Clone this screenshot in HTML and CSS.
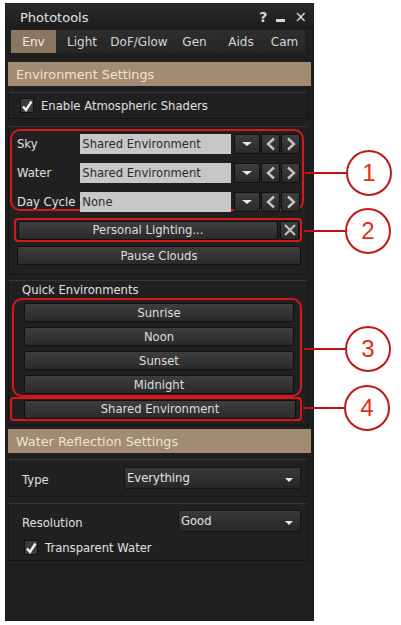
FILE: index.html
```html
<!DOCTYPE html>
<html>
<head>
<meta charset="utf-8">
<link rel="stylesheet" href="styles.css">
</head>
<body>
<div class="page">
  <div class="win">
    <div class="title">
      <span class="title-text">Phototools</span>
      <span class="title-icons"><span class="ti-q">?</span><span class="ti-min"></span><span class="ti-x">×</span></span>
    </div>
    <div class="tabs">
      <div class="tab active t-env">Env</div>
      <div class="tab t-light">Light</div>
      <div class="tab t-dof">DoF/Glow</div>
      <div class="tab t-gen">Gen</div>
      <div class="tab t-aids">Aids</div>
      <div class="tab t-cam">Cam</div>
    </div>
    <div class="hdr hdr1">Environment Settings</div>
    <div class="box box-check">
      <label class="check"><span class="cb"><svg width="12" height="12" viewBox="0 0 12 12"><path d="M2 6.5 L5 10 L10.5 1.5" fill="none" stroke="#f2f2f2" stroke-width="2.4"/></svg></span>Enable Atmospheric Shaders</label>
    </div>
    <div class="box box-env">
      <div class="ring ring1">
        <div class="erow"><span class="elabel">Sky</span><span class="combo">Shared Environment</span><span class="btn bdrop"><i class="tri"></i></span><span class="btn barrow"><svg width="12" height="14" viewBox="0 0 12 14"><path d="M9 1.5 L3 7 L9 12.5" fill="none" stroke="#c4c4c4" stroke-width="2.4"/></svg></span><span class="btn barrow"><svg width="12" height="14" viewBox="0 0 12 14"><path d="M3 1.5 L9 7 L3 12.5" fill="none" stroke="#c4c4c4" stroke-width="2.4"/></svg></span></div>
        <div class="erow"><span class="elabel">Water</span><span class="combo">Shared Environment</span><span class="btn bdrop"><i class="tri"></i></span><span class="btn barrow"><svg width="12" height="14" viewBox="0 0 12 14"><path d="M9 1.5 L3 7 L9 12.5" fill="none" stroke="#c4c4c4" stroke-width="2.4"/></svg></span><span class="btn barrow"><svg width="12" height="14" viewBox="0 0 12 14"><path d="M3 1.5 L9 7 L3 12.5" fill="none" stroke="#c4c4c4" stroke-width="2.4"/></svg></span></div>
        <div class="erow"><span class="elabel">Day Cycle</span><span class="combo">None</span><span class="btn bdrop"><i class="tri"></i></span><span class="btn barrow"><svg width="12" height="14" viewBox="0 0 12 14"><path d="M9 1.5 L3 7 L9 12.5" fill="none" stroke="#c4c4c4" stroke-width="2.4"/></svg></span><span class="btn barrow"><svg width="12" height="14" viewBox="0 0 12 14"><path d="M3 1.5 L9 7 L3 12.5" fill="none" stroke="#c4c4c4" stroke-width="2.4"/></svg></span></div>
      </div>
      <div class="ring ring2">
        <span class="btn bwide">Personal Lighting...</span><span class="btn bx"><svg width="14" height="14" viewBox="0 0 14 14"><path d="M2 2 L12 12 M12 2 L2 12" fill="none" stroke="#c4c4c4" stroke-width="2"/></svg></span>
      </div>
      <div class="btn bpause">Pause Clouds</div>
    </div>
    <div class="box box-quick">
      <div class="qlabel">Quick Environments</div>
      <div class="ring ring3">
        <div class="btn qbtn">Sunrise</div>
        <div class="btn qbtn">Noon</div>
        <div class="btn qbtn">Sunset</div>
        <div class="btn qbtn">Midnight</div>
      </div>
      <div class="ring ring4">
        <div class="btn qbtn">Shared Environment</div>
      </div>
    </div>
    <div class="hdr hdr2">Water Reflection Settings</div>
    <div class="box box-type">
      <span class="wlabel">Type</span>
      <span class="dd dd-type">Everything<i class="tri"></i></span>
    </div>
    <div class="box box-res">
      <div class="resrow">
        <span class="wlabel">Resolution</span>
        <span class="dd dd-res">Good<i class="tri"></i></span>
      </div>
      <label class="check check2"><span class="cb"><svg width="12" height="12" viewBox="0 0 12 12"><path d="M2 6.5 L5 10 L10.5 1.5" fill="none" stroke="#f2f2f2" stroke-width="2.4"/></svg></span>Transparent Water</label>
    </div>
  </div>
  <div class="callout c1"><span class="cline"></span><span class="circle">1</span></div>
  <div class="callout c2"><span class="cline"></span><span class="circle">2</span></div>
  <div class="callout c3"><span class="cline"></span><span class="circle">3</span></div>
  <div class="callout c4"><span class="cline"></span><span class="circle">4</span></div>
</div>
</body>
</html>
```

FILE: styles.css
```css
html, body {
  margin: 0;
  padding: 0;
  background: #ffffff;
}
body {
  font-family: "DejaVu Sans", sans-serif;
  font-size: 11.6px;
  color: #dcdcdc;
}
.page {
  position: relative;
  width: 401px;
  height: 625px;
  padding: 3px 0 0 5px;
  box-sizing: border-box;
}
.win {
  width: 309px;
  height: 618px;
  box-sizing: border-box;
  background: #1f1f1f;
  border: 1px solid #181b20;
  border-top-color: #22262c;
  padding: 0 2px;
  display: flex;
  flex-direction: column;
}
.title {
  height: 25px;
  display: flex;
  align-items: center;
  justify-content: space-between;
  padding: 0 6px 0 14px;
  background: linear-gradient(#2a2a2a, #1c1c1c);
  margin: 0 -2px;
}
.title-text {
  font-size: 13px;
  color: #e2e2e2;
  padding-top: 2px;
}
.title-icons {
  display: flex;
  align-items: center;
  gap: 9px;
  color: #d8d8d8;
  font-weight: bold;
}
.ti-q { font-size: 14px; }
.ti-min {
  width: 9px;
  height: 3px;
  background: #d8d8d8;
  margin-top: 8px;
}
.ti-x { font-size: 15px; font-weight: normal; }
.tabs {
  height: 23px;
  margin: 1px 6px 0 3px;
  background: #2a2a2a;
  display: flex;
  align-items: stretch;
}
.tab {
  display: flex;
  align-items: center;
  justify-content: center;
  font-size: 12px;
  color: #d6d6d6;
  background: linear-gradient(#2e2e2e, #262626);
  margin-right: 1px;
}
.tab.active {
  background: #8b7661;
  color: #f2ece4;
}
.t-env { width: 45px; }
.t-light { width: 50px; }
.t-dof { width: 62px; }
.t-gen { width: 47px; }
.t-aids { width: 44px; }
.t-cam { flex: 1; margin-right: 0; }
.hdr {
  height: 24px;
  background: #a18b72;
  color: #ece4da;
  font-size: 12.8px;
  display: flex;
  align-items: center;
  padding-left: 8px;
}
.hdr1 { margin-top: 9px; }
.box {
  border: 1px solid #141414;
  border-top-color: #363636;
  background: #202020;
  margin-right: 3px;
  box-sizing: border-box;
}
.box-check {
  margin-top: 6px;
  height: 27px;
  display: flex;
  align-items: center;
  padding-left: 11px;
}
.check {
  display: flex;
  align-items: center;
  gap: 7px;
  color: #e0e0e0;
}
.cb {
  width: 12px;
  height: 13px;
  background: #3c3c3c;
  border: 1px solid #111;
  display: flex;
  align-items: center;
  justify-content: center;
}
.box-env {
  margin-top: 7px;
  height: 149px;
  padding: 2px 3px 0 1px;
  display: flex;
  flex-direction: column;
}
.ring {
  border: 2px solid #d81818;
  border-radius: 10px;
  box-sizing: border-box;
}
.ring1 {
  height: 82px;
  padding: 3px 1px 0 5px;
  display: flex;
  flex-direction: column;
  gap: 9px;
}
.erow {
  display: flex;
  align-items: center;
  height: 20px;
}
.elabel {
  width: 64px;
  color: #e0e0e0;
}
.combo {
  width: 152px;
  height: 20px;
  background: #c7c7c7;
  color: #2a2a2a;
  display: flex;
  align-items: center;
  padding-left: 2px;
  margin-right: 3px;
  box-sizing: border-box;
}
.btn {
  background: linear-gradient(#3e3e3e, #2a2a2a);
  border: 1px solid #101010;
  border-radius: 2px;
  box-sizing: border-box;
  display: flex;
  align-items: center;
  justify-content: center;
  color: #dedede;
}
.bdrop {
  width: 27px;
  height: 20px;
  margin-right: 1px;
}
.barrow {
  width: 19px;
  height: 20px;
  margin-right: 1px;
}
.tri {
  display: block;
  width: 0;
  height: 0;
  border-left: 5px solid transparent;
  border-right: 5px solid transparent;
  border-top: 4px solid #e8e8e8;
}
.ring2 {
  margin-top: 7px;
  height: 24px;
  border-radius: 4px;
  padding: 0 1px 0 2px;
  display: flex;
  align-items: center;
  margin-left: 4px;
  margin-right: 2px;
}
.bwide {
  flex: 1;
  height: 19px;
  margin-right: 2px;
}
.bx {
  width: 19px;
  height: 19px;
}
.bpause {
  margin: 4px 3px 0 7px;
  height: 19px;
}
.box-quick {
  margin-top: 5px;
  height: 146px;
  padding: 1px 5px 0 1px;
  display: flex;
  flex-direction: column;
}
.qlabel {
  padding-left: 12px;
  color: #e0e0e0;
  height: 16px;
  line-height: 16px;
}
.ring3 {
  margin-top: 0;
  margin-left: 2px;
  height: 99px;
  padding: 3px 6px 0 10px;
  display: flex;
  flex-direction: column;
  gap: 5px;
}
.qbtn {
  height: 19px;
}
.ring4 {
  height: 24px;
  border-radius: 4px;
  padding: 0 4px 0 12px;
  display: flex;
  flex-direction: column;
  justify-content: center;
}
.hdr2 { margin-top: 3px; }
.box-type {
  margin-top: 6px;
  height: 38px;
  display: flex;
  align-items: center;
  padding: 0 6px 0 13px;
  justify-content: space-between;
}
.wlabel {
  color: #e0e0e0;
  padding-top: 4px;
}
.dd {
  height: 22px;
  background: linear-gradient(#3a3a3a, #262626);
  border: 1px solid #141414;
  border-radius: 2px;
  box-sizing: border-box;
  display: flex;
  align-items: center;
  justify-content: space-between;
  padding: 0 7px 0 2px;
  color: #e4e4e4;
}
.dd .tri {
  border-left-width: 4px;
  border-right-width: 4px;
  border-top-width: 4px;
  margin-top: 3px;
}
.dd-type { width: 177px; }
.dd-res { width: 123px; }
.box-res {
  margin-top: 6px;
  height: 58px;
  padding: 6px 6px 0 13px;
  display: flex;
  flex-direction: column;
}
.resrow {
  display: flex;
  align-items: center;
  justify-content: space-between;
}
.check2 {
  margin-top: 8px;
  margin-left: 2px;
}
.callout {
  position: absolute;
  display: flex;
  align-items: center;
}
.cline {
  width: 42px;
  height: 2px;
  background: #c01010;
}
.circle {
  width: 42px;
  height: 42px;
  border: 2px solid #c01818;
  border-radius: 50%;
  background: #fff;
  display: flex;
  align-items: center;
  justify-content: center;
  font-family: "Liberation Sans", Arial, sans-serif;
  font-size: 24px;
  color: #e03010;
  margin-left: -1px;
}
.c1 { left: 305px; top: 150px; }
.c2 { left: 304px; top: 208px; }
.c3 { left: 304px; top: 326px; }
.c4 { left: 303px; top: 385px; }
```
